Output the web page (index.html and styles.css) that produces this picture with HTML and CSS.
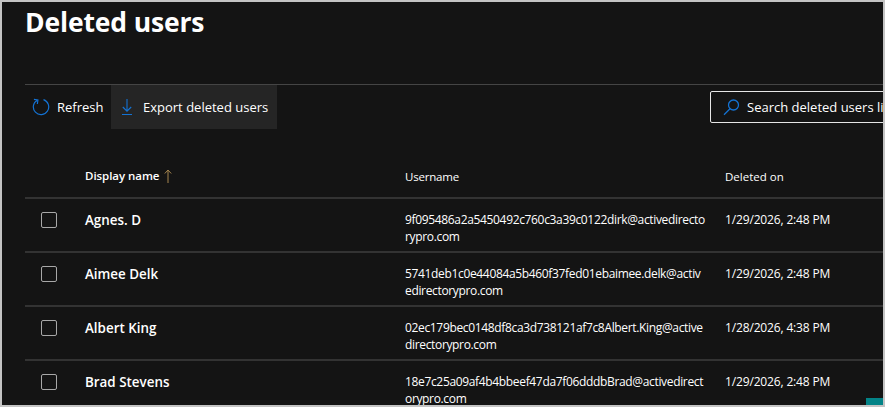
FILE: index.html
```html
<!DOCTYPE html>
<html lang="en">
<head>
<meta charset="utf-8">
<title>Deleted users</title>
<link rel="stylesheet" href="styles.css">
</head>
<body>
<div class="frame">
  <main class="panel">
    <h1 class="title">Deleted users</h1>
    <div class="toolbar">
      <button class="tool">
        <svg class="tool-icon" width="18" height="18" viewBox="0 0 18 18" fill="none" stroke="#1473d4" stroke-width="1.2"><path d="M5.2 2.2A7.7 7.7 0 1 0 11.5 1.6"/><path d="M5.9 6V2H1.9" transform="rotate(8 5.9 2)"/></svg>
        <span>Refresh</span>
      </button>
      <button class="tool tool-active">
        <svg class="tool-icon" width="12" height="18" viewBox="0 0 12 18" fill="none" stroke="#1473d4" stroke-width="1.1"><path d="M6 1V13M1.8 9L6 13.2L10.2 9M1 16.5H11"/></svg>
        <span>Export deleted users</span>
      </button>
      <div class="search">
        <svg width="17" height="17" viewBox="0 0 17 17" fill="none" stroke="#1473d4" stroke-width="1.3"><circle cx="10.5" cy="6" r="5"/><path d="M7 9.7L1 15.8"/></svg>
        <span>Search deleted users list</span>
      </div>
    </div>
    <div class="table">
      <div class="row head">
        <div class="c-check"></div>
        <div class="c-name sorted">Display name <svg width="8" height="14" viewBox="0 0 8 14" fill="none" stroke="#a5854f" stroke-width="1"><path d="M4 14V1M.8 4.5L4 1L7.2 4.5"/></svg></div>
        <div class="c-user">Username</div>
        <div class="c-date">Deleted on</div>
      </div>
      <div class="row">
        <div class="c-check"><span class="box"></span></div>
        <div class="c-name strong">Agnes. D</div>
        <div class="c-user">9f095486a2a5450492c760c3a39c0122dirk@activedirecto<br>rypro.com</div>
        <div class="c-date">1/29/2026, 2:48 PM</div>
      </div>
      <div class="row">
        <div class="c-check"><span class="box"></span></div>
        <div class="c-name strong">Aimee Delk</div>
        <div class="c-user">5741deb1c0e44084a5b460f37fed01ebaimee.delk@activ<br>edirectorypro.com</div>
        <div class="c-date">1/29/2026, 2:48 PM</div>
      </div>
      <div class="row">
        <div class="c-check"><span class="box"></span></div>
        <div class="c-name strong">Albert King</div>
        <div class="c-user">02ec179bec0148df8ca3d738121af7c8Albert.King@active<br>directorypro.com</div>
        <div class="c-date">1/28/2026, 4:38 PM</div>
      </div>
      <div class="row">
        <div class="c-check"><span class="box"></span></div>
        <div class="c-name strong">Brad Stevens</div>
        <div class="c-user">18e7c25a09af4b4bbeef47da7f06dddbBrad@activedirect<br>orypro.com</div>
        <div class="c-date">1/29/2026, 2:48 PM</div>
      </div>
    </div>
  </main>
  <div class="teal"></div>
</div>
</body>
</html>
```
FILE: styles.css
```css
* { box-sizing: border-box; }
html, body { margin: 0; padding: 0; height: 100%; overflow: hidden; }
body { background: #141414; color: #fff; font-family: "Open Sans", "Noto Sans", sans-serif; font-size: 13px; }
.frame { position: relative; width: 885px; height: 407px; border: 2px solid #c4c4c4; overflow: hidden; background: #141414; }
.panel { padding-left: 23px; width: 950px; }
.title { margin: 0; font-size: 26.5px; letter-spacing: -0.15px; line-height: 41px; height: 82px; font-weight: 700; }
.toolbar { display: flex; align-items: center; height: 45px; border-top: 1px solid #454545; }
.tool { display: flex; align-items: center; height: 44px; border: 0; background: none; color: #fff; font: inherit; padding: 0; }
.tool:first-child { width: 86px; padding-left: 7px; gap: 7px; }
.tool-active { width: 166px; padding-left: 10px; gap: 10px; background: #252525; }
.search { display: flex; align-items: center; gap: 7px; margin-left: 433px; width: 240px; height: 32px; padding-left: 12px; border: 1px solid #e6e6e6; border-radius: 2px; white-space: nowrap; }
.table { margin-top: 24px; }
.row { display: flex; height: 54px; align-items: flex-start; padding-top: 12px; border-bottom: 2px solid #333; }
.head { height: 46px; font-size: 11.5px; padding-top: 15px; }
.c-check { width: 60px; padding-left: 16px; display: flex; padding-top: 1px; }
.c-name { width: 320px; line-height: 18px; }
.c-user { width: 320px; font-size: 12px; letter-spacing: -0.34px; line-height: 17px; white-space: nowrap; }
.c-date { font-size: 12px; letter-spacing: -0.15px; line-height: 17px; white-space: nowrap; }
.head .c-user { font-size: 11.5px; letter-spacing: -0.2px; }
.head .c-date { font-size: 11.5px; letter-spacing: 0; }
.sorted { font-weight: 600; display: flex; align-items: center; gap: 5px; line-height: 16px; letter-spacing: -0.05px; }
.strong { font-weight: 600; font-size: 13.4px; }
.box { width: 16px; height: 16px; border: 1px solid #a8a8a8; border-radius: 2px; }
.teal { position: absolute; right: 0; bottom: 0; width: 17px; height: 7px; background: #038387; }
```
